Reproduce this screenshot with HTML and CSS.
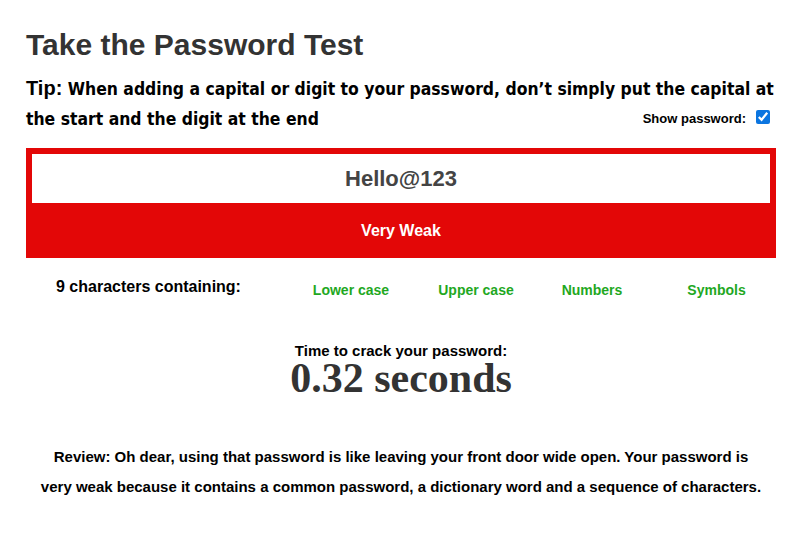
FILE: index.html
```html
<!DOCTYPE html>
<html>
<head>
<meta charset="utf-8">
<link rel="stylesheet" href="styles.css">
</head>
<body>
<div class="page">
  <h1 class="title">Take the Password Test</h1>
  <p class="tip"><b class="tip-label">Tip:</b> When adding a capital or digit to your password, don’t simply put the capital at the start and the digit at the end<label class="show"><span>Show password:</span><input type="checkbox" class="show-box" checked></label></p>
  <div class="meter">
    <div class="field">Hello@123</div>
    <div class="status">Very Weak</div>
  </div>
  <div class="chars">
    <div class="chars-label">9 characters containing:</div>
    <div class="chip">Lower case</div>
    <div class="chip">Upper case</div>
    <div class="chip">Numbers</div>
    <div class="chip chip-last">Symbols</div>
  </div>
  <div class="crack">
    <div class="crack-label">Time to crack your password:</div>
    <div class="crack-time">0.32 seconds</div>
  </div>
  <p class="review">Review: Oh dear, using that password is like leaving your front door wide open. Your password is very weak because it contains a common password, a dictionary word and a sequence of characters.</p>
</div>
</body>
</html>
```
FILE: styles.css
```css
html, body { margin: 0; padding: 0; background: #fff; }
body { font-family: "Liberation Sans", Arial, sans-serif; color: #000; }
.page { width: 750px; padding: 0 27px 0 26px; }
.title {
  margin: 28px 0 0;
  font-size: 30px;
  line-height: 34px;
  font-weight: bold;
  color: #333;
}
.tip {
  margin: 11px 0 0;
  font-size: 17.4px;
  line-height: 30px;
  font-weight: bold;
  font-family: "DejaVu Sans Condensed", "DejaVu Sans", sans-serif;
}
.tip-label { font-size: 20px; font-family: "Liberation Sans", Arial, sans-serif; }
.show {
  float: right;
  display: flex;
  align-items: center;
  gap: 10px;
  margin-top: 6px;
  font-family: "Liberation Sans", Arial, sans-serif;
  font-size: 13px;
  line-height: 18px;
  font-weight: bold;
}
.show-box { margin: 0 6px 4px 0; width: 14px; height: 14px; accent-color: #0b75e0; }
.meter { margin-top: 14px; background: #e30707; padding: 6px 6px 0; }
.field {
  background: #fff;
  height: 49px;
  display: flex;
  align-items: center;
  justify-content: center;
  font-size: 22px;
  font-weight: bold;
  color: #444;
}
.status {
  height: 55px;
  display: flex;
  align-items: center;
  justify-content: center;
  color: #fff;
  font-weight: bold;
  font-size: 16px;
}
.chars {
  display: grid;
  grid-template-columns: 263px 124px 126px 106px 131px;
  margin-top: 17px;
  align-items: start;
}
.chars-label { padding-left: 30px; font-size: 16px; font-weight: bold; line-height: 24px; }
.chip { text-align: center; color: #1fa81f; font-weight: bold; font-size: 14px; line-height: 24px; padding-top: 3px; }
.chip-last { padding-left: 12px; }
.crack { margin-top: 41px; text-align: center; }
.crack-label { font-size: 15px; font-weight: bold; line-height: 16px; }
.crack-time {
  font-family: "Liberation Serif", "Times New Roman", serif;
  font-size: 42px;
  font-weight: bold;
  line-height: 38px;
  color: #333;
}
.review {
  margin: 45px 0 0;
  padding: 0 13px;
  text-align: center;
  font-size: 15px;
  font-weight: bold;
  line-height: 30px;
}
```
